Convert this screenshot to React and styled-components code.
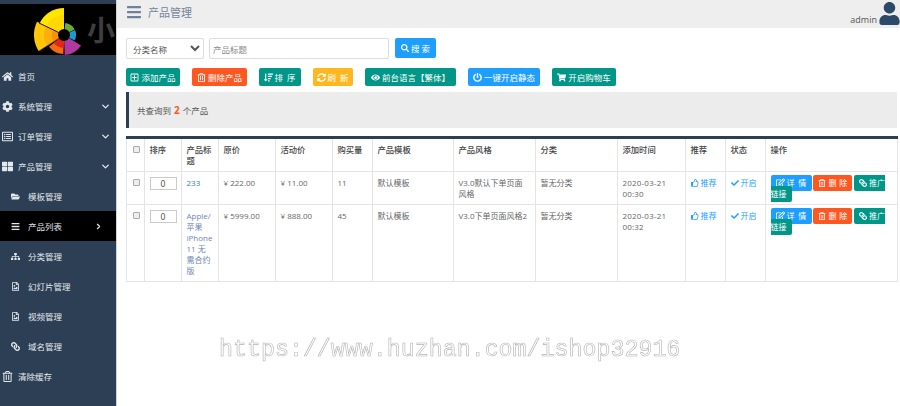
import React from "react";
import styled, { createGlobalStyle } from "styled-components";
import {
  FaHome, FaCog, FaRegListAlt, FaThLarge, FaFolderOpen, FaBars, FaSitemap, FaRegFileImage,
  FaLink, FaRegTrashAlt, FaUser, FaSearch, FaRegPlusSquare,
  FaSortAmountDown, FaSyncAlt, FaEye, FaPowerOff, FaShoppingCart, FaRegEdit, FaRegThumbsUp, FaCheck,
} from "react-icons/fa";
import { FiChevronDown, FiChevronRight } from "react-icons/fi";

const GlobalStyle = createGlobalStyle`
  html, body { margin: 0; padding: 0; height: 100%; background: #fff; overflow: hidden; }
  body { font-family: "Open Sans", "Noto Sans CJK SC", sans-serif; font-size: 8.5px; color: #555; }
`;

const Page = styled.div`
  position: relative;
  display: flex;
  width: 900px;
  height: 406px;
  overflow: hidden;
`;

const Sidebar = styled.aside`
  width: 116px;
  flex: none;
  padding-top: 4px;
  background: #2c3f54;
  border-right: 1px solid #cfd4d8;
`;

const Logo = styled.div`
  display: flex;
  align-items: center;
  height: 51px;
  background: #000;
  overflow: hidden;
  svg { flex: none; width: 87px; height: 51px; }
`;

const LogoText = styled.span`
  font-family: "Noto Sans CJK SC", sans-serif;
  font-size: 28px;
  font-weight: 700;
  line-height: 51px;
  color: #3e3e3e;
  white-space: nowrap;
`;

const Nav = styled.nav`
  padding-top: 6px;
`;

const NavItem = styled.div`
  display: flex;
  align-items: center;
  height: 30px;
  padding-left: ${(p) => (p.$sub ? "10px" : "2px")};
  padding-right: ${(p) => (p.$active ? "13px" : "5px")};
  background: ${(p) => (p.$active ? "#000" : "transparent")};
  color: #e3e8ed;
  font-family: "Noto Sans CJK SC", sans-serif;
  font-size: 8.5px;
`;

const NavIcon = styled.span`
  display: flex;
  justify-content: center;
  width: 11px;
  margin-right: ${(p) => (p.$sub ? "7px" : "5px")};
  font-size: ${(p) => (p.$sub ? "9px" : "11px")};
`;

const NavLabel = styled.span`
  flex: 1;
`;

const Main = styled.main`
  flex: 1;
  min-width: 0;
`;

const Header = styled.header`
  display: flex;
  align-items: flex-start;
  height: 28px;
  background: #eee;
`;

const MenuButton = styled.span`
  display: flex;
  margin: 4px 6px 0 9px;
  font-size: 16px;
  color: #6f8299;
`;

const Title = styled.span`
  flex: 1;
  margin-top: 4px;
  font-family: "Noto Sans CJK SC", sans-serif;
  font-size: 11px;
  line-height: 16px;
  color: #74859a;
`;

const UserName = styled.span`
  margin: 13px 1px 0 0;
  font-size: 9px;
  line-height: 13px;
  color: #555;
`;

const Avatar = styled.span`
  display: flex;
  margin: 2px -1px 0 0;
  font-size: 23px;
  color: #2c4a68;
`;

const Content = styled.div`
  padding: 10px 3px 0 9px;
`;

const FilterRow = styled.div`
  display: flex;
  align-items: flex-start;
  gap: 5px;
`;

const Select = styled.select`
  width: 78px;
  height: 21px;
  padding: 0 0 0 2px;
  border: 1px solid #ddd;
  border-radius: 2px;
  background: #fff;
  color: #555;
  font-family: "Noto Sans CJK SC", sans-serif;
  font-size: 8.5px;
`;

const TextInput = styled.input`
  width: 180px;
  height: 21px;
  box-sizing: border-box;
  padding: 0 3px;
  border: 1px solid #ddd;
  border-radius: 2px;
  font-family: "Noto Sans CJK SC", sans-serif;
  font-size: 8.5px;
  margin-right: 1px;
  &::placeholder { color: #8a8a8a; }
`;

const Button = styled.a`
  display: inline-flex;
  align-items: center;
  justify-content: center;
  gap: 2px;
  box-sizing: border-box;
  width: ${(p) => p.$w}px;
  height: ${(p) => p.$h || 18}px;
  border-radius: 2px;
  background: ${(p) => p.$color};
  color: #fff;
  font-family: "Noto Sans CJK SC", sans-serif;
  font-size: 8.5px;
  letter-spacing: ${(p) => p.$spread || 0}px;
  white-space: nowrap;
`;

const ToolRow = styled.div`
  display: flex;
  gap: 12px;
  margin-top: 9px;
`;

const Notice = styled.div`
  margin-top: 6px;
  height: 36px;
  padding-left: 8px;
  border-left: 3px solid #2c3f54;
  background: #ececec;
  font-family: "Noto Sans CJK SC", sans-serif;
  font-size: 8.5px;
  line-height: 36px;
  color: #555;
`;

const Count = styled.b`
  margin: 0 3px;
  color: #ff5722;
  font-family: "Open Sans", sans-serif;
  font-size: 10px;
`;

const Table = styled.table`
  width: 771px;
  margin-top: 8px;
  table-layout: fixed;
  border-collapse: collapse;
  border-top: 3px solid #2c3f54;
  border-bottom: 1px solid #e4e4e4;
  color: #666;
  font-size: 8px;
  line-height: 11px;
  th, td {
    padding: 5px 4.5px;
    vertical-align: top;
    text-align: left;
    border: 1px solid #e4e4e4;
    border-top: 0;
  }
  th { font-weight: 500; font-size: 8.3px; color: #444; }
  tbody tr + tr td { border-top: 1px solid #f2f2f2; }
`;

const Check = styled.input.attrs({ type: "checkbox" })`
  appearance: none;
  display: block;
  box-sizing: border-box;
  width: 7px;
  height: 7px;
  margin: 2px 0 0 1px;
  border: 1px solid #aaa;
  border-radius: 1px;
  background: #eee;
`;

const Sort = styled.input`
  display: block;
  box-sizing: border-box;
  width: 27px;
  height: 13px;
  margin: 0;
  padding: 0;
  border: 1px solid #ccc;
  text-align: center;
  font-family: "Open Sans", sans-serif;
  font-size: 8.5px;
  color: #444;
`;

const ProductLink = styled.a`
  color: ${(p) => p.$color};
`;

const DateText = styled.span`
  letter-spacing: 0.2px;
`;

const Flag = styled.span`
  color: #1e9fff;
  svg { margin-right: 2px; vertical-align: -1px; }
`;

const Action = styled.a`
  padding: 2px 5px 3px;
  margin-right: 1.5px;
  border-radius: 2px;
  background: ${(p) => p.$color};
  color: #fff;
  letter-spacing: ${(p) => p.$spread || 0}px;
  svg { margin-right: 2px; vertical-align: -1px; }
`;

const ChainIcon = styled(FaLink)`
  transform: scaleX(-1);
`;

const Watermark = styled.div`
  position: absolute;
  left: 219px;
  top: 335px;
  font-family: "Liberation Mono", monospace;
  font-size: 23.3px;
  line-height: 30px;
  color: #fff;
  -webkit-text-stroke: 0.6px #b4b4b4;
  white-space: nowrap;
  transform: translateZ(0);
`;

const TEAL = "#009688";
const ORANGE = "#ff5722";
const YELLOW = "#ffb71f";
const BLUE = "#1e9fff";

const sector = (r, a0, a1) => {
  const pt = (a) => {
    const rad = (a * Math.PI) / 180;
    return `${(64 + r * Math.sin(rad)).toFixed(1)} ${(31 - r * Math.cos(rad)).toFixed(1)}`;
  };
  return `M64 31L${pt(a0)}A${r} ${r} 0 0 1 ${pt(a1)}Z`;
};

const LOGO_PARTS = [
  [27, 296, 360, "#ffe600"],
  [20, 296, 360, "#ffd800"],
  [30, 237, 296, "#ffc60a"],
  [20, 237, 296, "#fcae0c"],
  [12, 237, 296, "#f69208"],
  [12, 6, 62, "#6cab35"],
  [12, 66, 118, "#1b9ad0"],
  [20, 122, 178, "#b23a9e"],
  [19, 182, 232, "#f26a12"],
  [13, 182, 232, "#e2261c"],
];

const LogoMark = () => (
  <svg viewBox="0 0 87 51">
    {LOGO_PARTS.map(([r, a0, a1, fill], i) => (
      <path key={i} d={sector(r, a0, a1)} fill={fill} />
    ))}
    <path d="M64 31L39 19" stroke="#2a1c00" strokeWidth="1" />
    <path d="M64 31L39 47" stroke="#2a1c00" strokeWidth="0.6" />
    <circle cx="64" cy="31" r="6" fill="#000" />
  </svg>
);

const MENU = [
  { icon: FaHome, label: "首页" },
  { icon: FaCog, label: "系统管理", arrow: "down" },
  { icon: FaRegListAlt, label: "订单管理", arrow: "down" },
  { icon: FaThLarge, label: "产品管理", arrow: "down" },
  { icon: FaFolderOpen, label: "模板管理", sub: true },
  { icon: FaBars, label: "产品列表", sub: true, active: true, arrow: "right" },
  { icon: FaSitemap, label: "分类管理", sub: true },
  { icon: FaRegFileImage, label: "幻灯片管理", sub: true },
  { icon: FaRegFileImage, label: "视频管理", sub: true },
  { icon: ChainIcon, label: "域名管理", sub: true },
  { icon: FaRegTrashAlt, label: "清除缓存" },
];

const TOOLS = [
  { icon: FaRegPlusSquare, label: "添加产品", color: TEAL, w: 54 },
  { icon: FaRegTrashAlt, label: "删除产品", color: ORANGE, w: 55 },
  { icon: FaSortAmountDown, label: "排 序", color: TEAL, w: 42, spread: 1 },
  { icon: FaSyncAlt, label: "刷 新", color: YELLOW, w: 40, spread: 1 },
  { icon: FaEye, label: "前台语言【繁体】", color: TEAL, w: 91 },
  { icon: FaPowerOff, label: "一键开启静态", color: BLUE, w: 72 },
  { icon: FaShoppingCart, label: "开启购物车", color: TEAL, w: 64 },
];

const COLUMNS = [18, 37, 37, 57, 57, 40, 81, 82, 82, 68, 40, 40, 132];
const HEADS = ["排序", "产品标题", "原价", "活动价", "购买量", "产品模板", "产品风格", "分类", "添加时间", "推荐", "状态", "操作"];

const ROWS = [
  { title: "233", color: "#337ab7", price: "¥ 222.00", sale: "¥ 11.00", sold: "11", style: "V3.0默认下单页面风格", time: "2020-03-21 00:30" },
  { title: "Apple/苹果 iPhone 11 无需合约版", color: "#6d86b5", price: "¥ 5999.00", sale: "¥ 888.00", sold: "45", style: "V3.0下单页面风格2", time: "2020-03-21 00:32" },
];

export default function App() {
  return (
    <Page>
      <GlobalStyle />
      <Sidebar>
        <Logo>
          <LogoMark />
          <LogoText>小</LogoText>
        </Logo>
        <Nav>
          {MENU.map((m) => (
            <NavItem key={m.label} $sub={m.sub} $active={m.active}>
              <NavIcon $sub={m.sub}><m.icon /></NavIcon>
              <NavLabel>{m.label}</NavLabel>
              {m.arrow === "down" && <FiChevronDown size={11} strokeWidth={3} />}
              {m.arrow === "right" && <FiChevronRight size={9} strokeWidth={3} />}
            </NavItem>
          ))}
        </Nav>
      </Sidebar>
      <Main>
        <Header>
          <MenuButton><FaBars /></MenuButton>
          <Title>产品管理</Title>
          <UserName>admin</UserName>
          <Avatar><FaUser /></Avatar>
        </Header>
        <Content>
          <FilterRow>
            <Select defaultValue="">
              <option value="">分类名称</option>
            </Select>
            <TextInput placeholder="产品标题" />
            <Button $color={BLUE} $w={41} $h={20}><FaSearch size={8} />搜 索</Button>
          </FilterRow>
          <ToolRow>
            {TOOLS.map((t) => (
              <Button key={t.label} $color={t.color} $w={t.w} $spread={t.spread}><t.icon size={9} />{t.label}</Button>
            ))}
          </ToolRow>
          <Notice>共查询到<Count>2</Count>个产品</Notice>
          <Table>
            <colgroup>
              {COLUMNS.map((w, i) => <col key={i} style={{ width: w }} />)}
            </colgroup>
            <thead>
              <tr>
                <th><Check /></th>
                {HEADS.map((h) => <th key={h}>{h}</th>)}
              </tr>
            </thead>
            <tbody>
              {ROWS.map((r) => (
                <tr key={r.title}>
                  <td><Check /></td>
                  <td><Sort defaultValue="0" /></td>
                  <td><ProductLink $color={r.color}>{r.title}</ProductLink></td>
                  <td>{r.price}</td>
                  <td>{r.sale}</td>
                  <td>{r.sold}</td>
                  <td>默认模板</td>
                  <td>{r.style}</td>
                  <td>暂无分类</td>
                  <td><DateText>{r.time}</DateText></td>
                  <td><Flag><FaRegThumbsUp size={8} />推荐</Flag></td>
                  <td><Flag><FaCheck size={8} />开启</Flag></td>
                  <td>
                    <Action $color={BLUE} $spread={0.8}><FaRegEdit size={9} />详 情</Action>
                    <Action $color={ORANGE} $spread={0.3}><FaRegTrashAlt size={8} />删 除</Action>
                    <Action $color={TEAL}><ChainIcon size={8} />推广链接</Action>
                  </td>
                </tr>
              ))}
            </tbody>
          </Table>
        </Content>
      </Main>
      <Watermark>https://www.huzhan.com/ishop32916</Watermark>
    </Page>
  );
}
